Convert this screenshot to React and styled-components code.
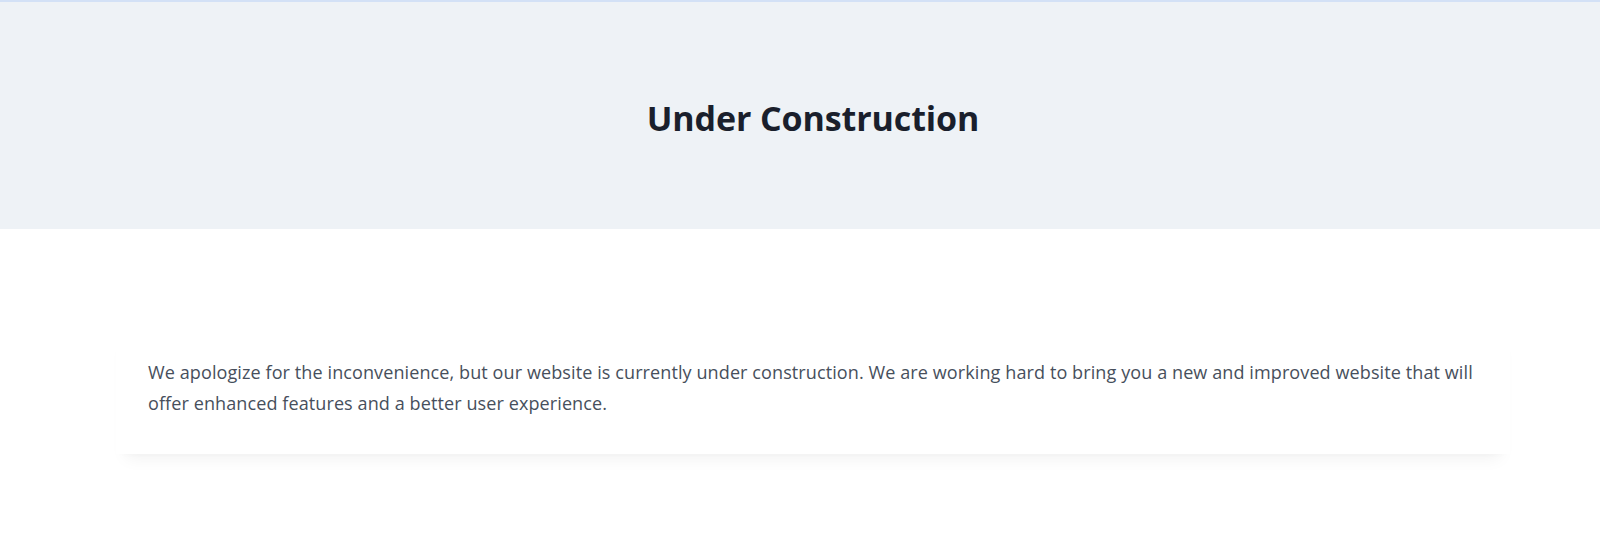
import React from 'react';
import styled, { createGlobalStyle } from 'styled-components';

const GlobalStyle = createGlobalStyle`
  html, body {
    margin: 0;
    padding: 0;
    background: #ffffff;
  }
  body {
    font-family: "Open Sans", "Noto Sans", "Liberation Sans", sans-serif;
    -webkit-font-smoothing: antialiased;
  }
  * { box-sizing: border-box; }
`;

const Page = styled.div`
  min-height: 543px;
  border-top: 2px solid #d3e1f6;
`;

const Hero = styled.header`
  height: 227px;
  background: #eef2f6;
  display: flex;
  align-items: center;
  justify-content: center;
  padding: 6px 0 0 26px;
`;

const Title = styled.h1`
  margin: 0;
  font-size: 34px;
  font-weight: 700;
  line-height: 1.2;
  color: #1a1f2c;
  letter-spacing: -0.1px;
`;

const Main = styled.main`
  padding: 96px 0 0 26px;
`;

const Card = styled.section`
  width: 1394px;
  margin: 0 auto;
  padding: 32px 32px 35px;
  background: #ffffff;
  box-shadow: 0 14px 16px -10px rgba(0, 0, 0, 0.06), 0 4px 8px -6px rgba(0, 0, 0, 0.04);
`;

const Message = styled.p`
  margin: 0;
  font-size: 18.05px;
  letter-spacing: 0.09px;
  line-height: 31px;
  color: #474f5c;
`;

export default function App() {
  return (
    <>
      <GlobalStyle />
      <Page>
        <Hero>
          <Title>Under Construction</Title>
        </Hero>
        <Main>
          <Card>
            <Message>
              We apologize for the inconvenience, but our website is currently under construction. We are working hard to
              bring you a new and improved website that will offer enhanced features and a better user experience.
            </Message>
          </Card>
        </Main>
      </Page>
    </>
  );
}
